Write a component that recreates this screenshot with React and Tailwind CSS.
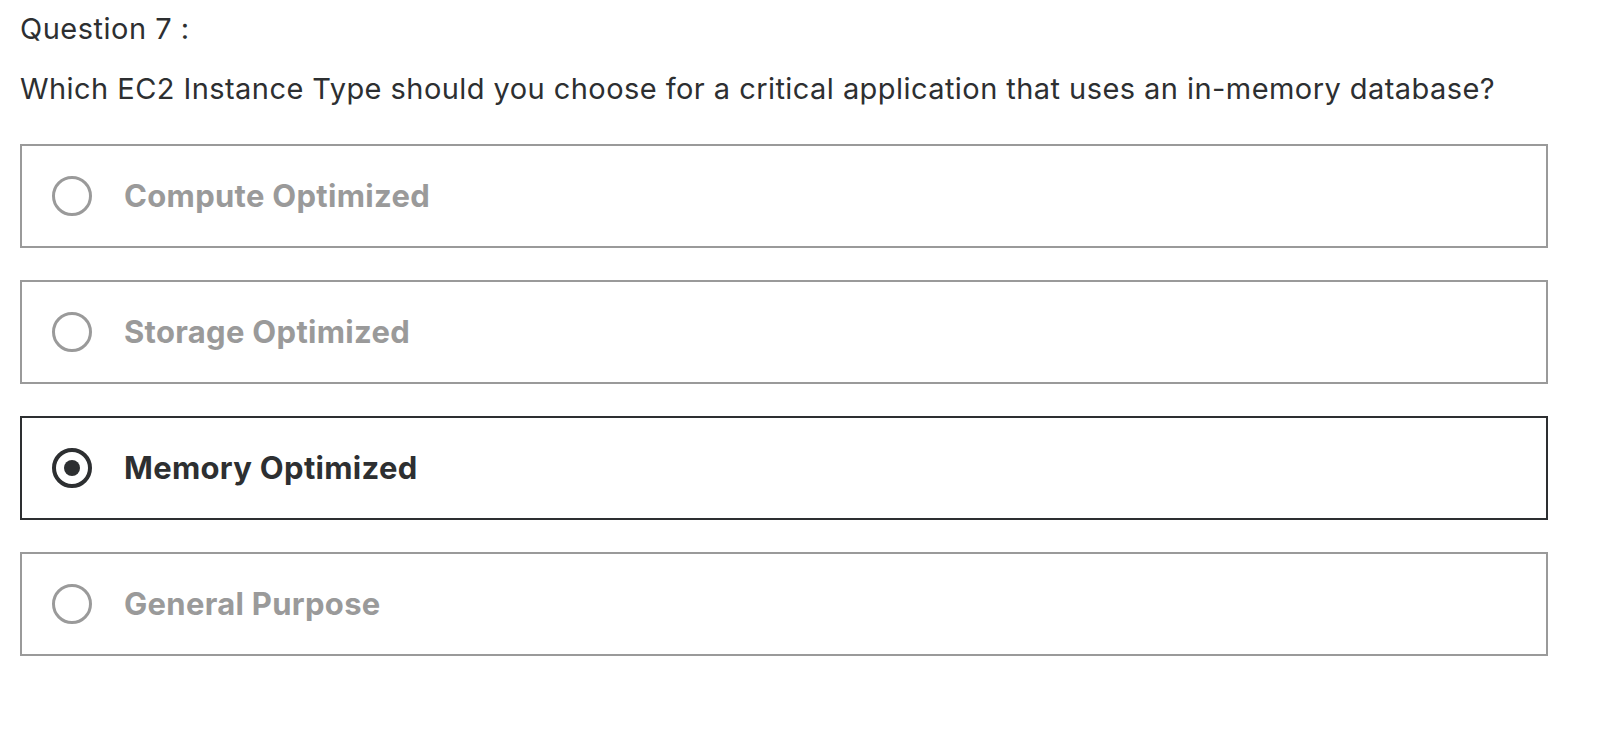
import React from "react";

const options = [
  { label: "Compute Optimized", selected: false },
  { label: "Storage Optimized", selected: false },
  { label: "Memory Optimized", selected: true },
  { label: "General Purpose", selected: false },
];

function Radio({ selected }) {
  if (selected) {
    return (
      <span className="flex h-[40px] w-[40px] shrink-0 items-center justify-center rounded-full border-[4px] border-[#2d2f31]">
        <span className="h-[16px] w-[16px] rounded-full bg-[#2d2f31]" />
      </span>
    );
  }
  return <span className="h-[40px] w-[40px] shrink-0 rounded-full border-[3.5px] border-[#9a9a9a]" />;
}

export default function App() {
  return (
    <div
      className="min-h-[736px] w-[1624px] bg-white pl-[20px] pt-[10px] text-[#2d2f31]"
      style={{ fontFamily: "Inter, 'Liberation Sans', sans-serif" }}
    >
      <div className="text-[29px] leading-[38px] tracking-[0.5px]">Question 7 :</div>
      <div className="mt-[22px] text-[29px] leading-[38px] tracking-[0.44px]">
        Which EC2 Instance Type should you choose for a critical application that uses an in-memory database?
      </div>
      <div className="mt-[36px] flex w-[1528px] flex-col gap-[32px]">
        {options.map((o) => (
          <div
            key={o.label}
            className={`flex h-[104px] items-center gap-[32px] border-2 pl-[30px] ${
              o.selected ? "border-[#2d2f31]" : "border-[#9a9a9a]"
            }`}
          >
            <Radio selected={o.selected} />
            <span
              className={`text-[31px] font-bold tracking-[0.3px] ${
                o.selected ? "text-[#2d2f31]" : "text-[#9a9a9a]"
              }`}
            >
              {o.label}
            </span>
          </div>
        ))}
      </div>
    </div>
  );
}
